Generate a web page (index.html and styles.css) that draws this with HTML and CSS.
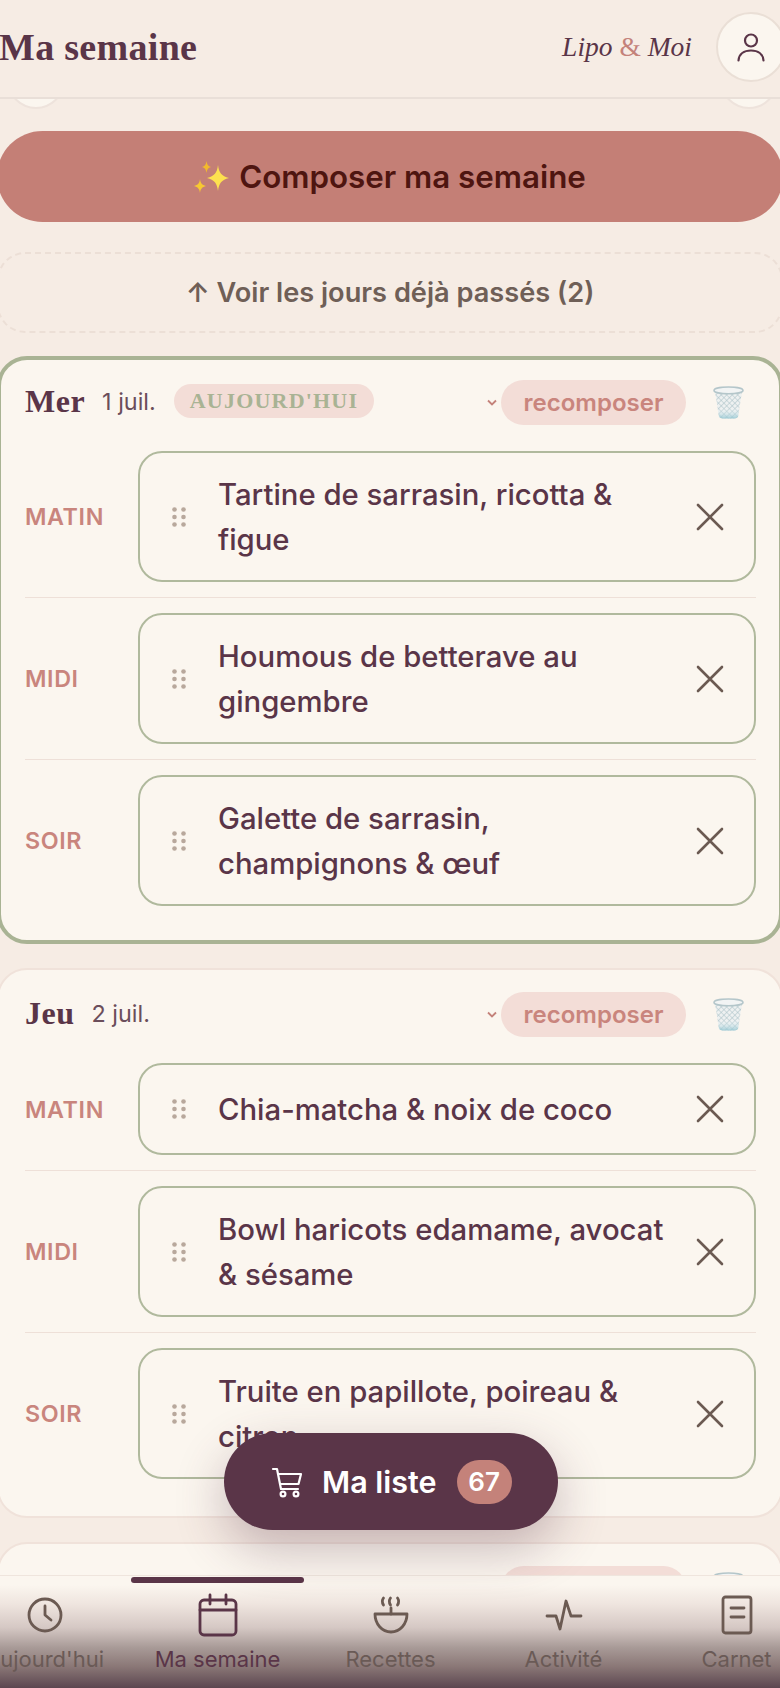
FILE: index.html
```html
<!DOCTYPE html>
<html lang="fr">
<head>
    <meta charset="UTF-8">
    <meta name="viewport" content="width=device-width, initial-scale=1.0">
    <title>Ma semaine</title>
    <link rel="stylesheet" href="styles.css">
</head>
<body>
    <svg class="defs" width="0" height="0">
        <defs>
            <pattern id="mesh" width="4" height="4" patternUnits="userSpaceOnUse" patternTransform="rotate(45)">
                <rect width="4" height="4" fill="#eef1f1"/>
                <path d="M0 0H4M0 0V4" stroke="#a9c0c6" stroke-width="1.1"/>
            </pattern>
            <linearGradient id="basket" x1="0" y1="0" x2="0" y2="1">
                <stop offset="0.6" stop-color="#fff" stop-opacity="0"/>
                <stop offset="1" stop-color="#8fc4d0" stop-opacity="0.8"/>
            </linearGradient>
            <symbol id="trash" viewBox="0 0 32 34">
                <path d="M2 5 6 31Q6.500 33.500 10 33.500H22Q25.500 33.500 26 31L30 5Z" fill="url(#mesh)"/>
                <path d="M2 5 6 31Q6.500 33.500 10 33.500H22Q25.500 33.500 26 31L30 5Z" fill="url(#basket)"/>
                <ellipse cx="16" cy="4.500" rx="15" ry="3.500" fill="#f2f4f4" stroke="#b4c6ca" stroke-width="1.500"/>
            </symbol>
            <symbol id="cross" viewBox="0 0 28 28">
                <path d="M2 2 26 26M26 2 2 26" fill="none" stroke="#6b5a52" stroke-width="2.600" stroke-linecap="round"/>
            </symbol>
            <symbol id="grip" viewBox="0 0 14 20">
                <g fill="#b8a89c">
                    <circle cx="2.500" cy="2.500" r="2.300"/><circle cx="11.500" cy="2.500" r="2.300"/>
                    <circle cx="2.500" cy="10" r="2.300"/><circle cx="11.500" cy="10" r="2.300"/>
                    <circle cx="2.500" cy="17.500" r="2.300"/><circle cx="11.500" cy="17.500" r="2.300"/>
                </g>
            </symbol>
            <symbol id="chevron" viewBox="0 0 10 7">
                <path d="M1 1.500 5 5.500 9 1.500" fill="none" stroke="#c4827a" stroke-width="1.800"/>
            </symbol>
        </defs>
    </svg>

    <div class="app">
        <header class="topbar">
            <h1>Ma semaine</h1>
            <div class="topbar-right">
                <span class="brand">Lipo <em>&amp;</em> Moi</span>
                <button class="avatar">
                    <svg width="30" height="30" viewBox="0 0 30 30" fill="none" stroke="#5a3548" stroke-width="2.200" stroke-linecap="round">
                        <circle cx="15" cy="8.500" r="6"/>
                        <path d="M2.500 28.500C3 22 8 18.500 15 18.500S27 22 27.500 28.500"/>
                    </svg>
                </button>
            </div>
        </header>

        <main class="content">
            <div class="week-nav">
                <span class="round-btn"></span>
                <span class="round-btn"></span>
            </div>

            <button class="compose">
                <svg class="sparkles" width="36" height="32" viewBox="0 0 36 32">
                    <path d="M24 4C25 12 27.500 15 35 17 27.500 19 25 22 24 30 23 22 20.500 19 13 17 20.500 15 23 12 24 4Z" fill="#fde14f"/>
                    <path d="M12.500 0C13 3.500 14 5 17 6 14 7 13 8.500 12.500 12 12 8.500 11 7 8 6 11 5 12 3.500 12.500 0Z" fill="#f2b92c"/>
                    <path d="M6 18C6.500 22 8 24 12 25 8 26 6.500 28 6 32 5.500 28 4 26 0 25 4 24 5.500 22 6 18Z" fill="#f7c832"/>
                </svg>
                Composer ma semaine
            </button>

            <button class="past">↑ Voir les jours déjà passés (2)</button>

            <section class="day today">
                <div class="day-head">
                    <div class="day-title">
                        <h2>Mer</h2>
                        <span class="date">1 juil.</span>
                        <span class="today-chip">AUJOURD'HUI</span>
                    </div>
                    <div class="day-actions">
                        <svg class="chevron"><use href="#chevron"/></svg>
                        <span class="recompose">recomposer</span>
                        <svg class="trash"><use href="#trash"/></svg>
                    </div>
                </div>
                <div class="meal">
                    <span class="meal-label">MATIN</span>
                    <div class="slot">
                        <svg class="grip"><use href="#grip"/></svg>
                        <p>Tartine de sarrasin, ricotta &amp; figue</p>
                        <svg class="cross"><use href="#cross"/></svg>
                    </div>
                </div>
                <div class="meal">
                    <span class="meal-label">MIDI</span>
                    <div class="slot">
                        <svg class="grip"><use href="#grip"/></svg>
                        <p>Houmous de betterave au gingembre</p>
                        <svg class="cross"><use href="#cross"/></svg>
                    </div>
                </div>
                <div class="meal">
                    <span class="meal-label">SOIR</span>
                    <div class="slot">
                        <svg class="grip"><use href="#grip"/></svg>
                        <p>Galette de sarrasin, champignons &amp; œuf</p>
                        <svg class="cross"><use href="#cross"/></svg>
                    </div>
                </div>
            </section>

            <section class="day">
                <div class="day-head">
                    <div class="day-title">
                        <h2>Jeu</h2>
                        <span class="date">2 juil.</span>
                    </div>
                    <div class="day-actions">
                        <svg class="chevron"><use href="#chevron"/></svg>
                        <span class="recompose">recomposer</span>
                        <svg class="trash"><use href="#trash"/></svg>
                    </div>
                </div>
                <div class="meal">
                    <span class="meal-label">MATIN</span>
                    <div class="slot">
                        <svg class="grip"><use href="#grip"/></svg>
                        <p>Chia-matcha &amp; noix de coco</p>
                        <svg class="cross"><use href="#cross"/></svg>
                    </div>
                </div>
                <div class="meal">
                    <span class="meal-label">MIDI</span>
                    <div class="slot">
                        <svg class="grip"><use href="#grip"/></svg>
                        <p>Bowl haricots edamame, avocat &amp; sésame</p>
                        <svg class="cross"><use href="#cross"/></svg>
                    </div>
                </div>
                <div class="meal">
                    <span class="meal-label">SOIR</span>
                    <div class="slot">
                        <svg class="grip"><use href="#grip"/></svg>
                        <p>Truite en papillote, poireau &amp; citron</p>
                        <svg class="cross"><use href="#cross"/></svg>
                    </div>
                </div>
            </section>

            <section class="day">
                <div class="day-head">
                    <div class="day-title">
                        <h2>Ven</h2>
                        <span class="date">3 juil.</span>
                    </div>
                    <div class="day-actions">
                        <svg class="chevron"><use href="#chevron"/></svg>
                        <span class="recompose">recomposer</span>
                        <svg class="trash"><use href="#trash"/></svg>
                    </div>
                </div>
            </section>
        </main>

        <button class="list-fab">
            <svg width="32" height="32" viewBox="0 0 32 32" fill="none" stroke="#fff" stroke-width="2.200" stroke-linecap="round" stroke-linejoin="round">
                <path d="M2 3H6L10 23H27"/>
                <path d="M7 8H30L27.500 18H9"/>
                <circle cx="12" cy="28" r="2.400"/>
                <circle cx="25" cy="28" r="2.400"/>
            </svg>
            <span>Ma liste</span>
            <b class="count">67</b>
        </button>

        <nav class="tabs">
            <a class="tab">
                <span class="tab-icon">
                    <svg width="36" height="36" viewBox="0 0 36 36" fill="none" stroke="#6b5a52" stroke-width="2.800" stroke-linecap="round" stroke-linejoin="round">
                        <circle cx="18" cy="18" r="16"/>
                        <path d="M18 9V18L24 23"/>
                    </svg>
                </span>
                Aujourd'hui
            </a>
            <a class="tab active">
                <span class="tab-icon">
                    <svg width="40" height="44" viewBox="0 0 40 44" fill="none" stroke="#5a3548" stroke-width="2.800" stroke-linecap="round" stroke-linejoin="round">
                        <rect x="2" y="7" width="36" height="35" rx="4"/>
                        <path d="M2 17H38M12 2V11M28 2V11"/>
                    </svg>
                </span>
                Ma semaine
            </a>
            <a class="tab">
                <span class="tab-icon">
                    <svg width="36" height="38" viewBox="0 0 36 38" fill="none" stroke="#6b5a52" stroke-width="2.800" stroke-linecap="round" stroke-linejoin="round">
                        <path d="M2 18H34C34 28 27 36 18 36S2 28 2 18Z"/>
                        <path d="M18 12V18"/>
                        <path d="M10.500 2C9 4 9 6.500 10.500 9M17.500 2C16 4 16 6.500 17.500 9M24.500 2C26 4 26 6.500 24.500 9"/>
                    </svg>
                </span>
                Recettes
            </a>
            <a class="tab">
                <span class="tab-icon">
                    <svg width="38" height="34" viewBox="0 0 38 34" fill="none" stroke="#6b5a52" stroke-width="2.800" stroke-linecap="round" stroke-linejoin="round">
                        <path d="M2 18H11L15 31 21 3 26 18H36"/>
                    </svg>
                </span>
                Activité
            </a>
            <a class="tab">
                <span class="tab-icon">
                    <svg width="32" height="40" viewBox="0 0 32 40" fill="none" stroke="#6b5a52" stroke-width="2.800" stroke-linecap="round" stroke-linejoin="round">
                        <rect x="2" y="2" width="28" height="36" rx="2.500"/>
                        <path d="M10 13H23M10 22H23"/>
                    </svg>
                </span>
                Carnet
            </a>
        </nav>
    </div>
</body>
</html>
```

FILE: styles.css
```css
/* General Layout and Reset */
* {
    margin: 0;
    padding: 0;
    box-sizing: border-box;
}
html, body {
    height: 100%;
    overflow: hidden;
}
body {
    font-family: 'Inter', sans-serif;
    background-color: #f6ece4;
    color: #5a3548;
}
button {
    font-family: inherit;
    border: none;
    background: none;
}
.defs {
    display: block;
}

.app {
    position: relative;
    height: 1688px;
    display: flex;
    flex-direction: column;
    overflow: hidden;
}

/* Top bar */
.topbar {
    position: relative;
    z-index: 2;
    height: 99px;
    flex-shrink: 0;
    margin-right: -6px;
    padding: 0 0 4px;
    display: flex;
    align-items: center;
    justify-content: space-between;
    background-color: #f6ece4;
    border-bottom: 2px solid #e9dfd8;
}
.topbar h1 {
    font-family: 'Liberation Serif', serif;
    font-size: 38px;
    font-weight: 700;
    letter-spacing: 0.3px;
    margin-left: -1px;
}
.topbar-right {
    display: flex;
    align-items: center;
    gap: 24px;
}
.brand {
    font-family: 'Liberation Serif', serif;
    font-style: italic;
    font-size: 27.500px;
    color: #5a3548;
}
.brand em {
    font-style: normal;
    color: #c4827a;
}
.avatar {
    width: 70px;
    height: 70px;
    border-radius: 50%;
    background-color: #fbf6ef;
    border: 2px solid #eadfd6;
    display: flex;
    align-items: center;
    justify-content: center;
}

/* Scrolling content */
.content {
    flex: 1;
    min-height: 0;
    overflow: hidden;
}
.week-nav {
    display: flex;
    justify-content: space-between;
    margin: -48px 2px 0 7px;
    height: 58px;
}
.round-btn {
    width: 58px;
    height: 58px;
    border-radius: 50%;
    background-color: #fbf6ef;
    border: 2px solid #eee3dc;
}
.compose, .past, .day {
    display: block;
    width: 786px;
    margin-left: -3px;
}
.compose {
    height: 91px;
    margin-top: 22px;
    border-radius: 46px;
    background-color: #c47f76;
    color: #4e1510;
    font-size: 31.300px;
    font-weight: 600;
    display: flex;
    align-items: center;
    justify-content: center;
    gap: 9px;
}
.past {
    height: 81px;
    margin-top: 30px;
    margin-bottom: -1px;
    border: 2px dashed #ecdfd6;
    border-radius: 28px;
    color: #6f5f57;
    font-size: 27.200px;
    font-weight: 600;
}

/* Day cards */
.day {
    margin-top: 24px;
    padding: 22px 25px 22px 26px;
    border: 2px solid #f0e2da;
    border-radius: 30px;
    background-color: #fbf6ef;
}
.today {
    border: 4px solid #a9b394;
    padding: 20px 23px 19px 24px;
}
.day-head {
    display: flex;
    align-items: center;
    justify-content: space-between;
    height: 45px;
    margin-bottom: 11px;
}
.day-title {
    display: flex;
    align-items: center;
    margin-top: -3px;
}
.day-title h2 {
    font-family: 'Liberation Serif', serif;
    font-size: 32px;
    font-weight: 700;
    letter-spacing: 0.5px;
}
.date {
    font-size: 23.400px;
    margin-left: 17px;
    color: #6b4e5b;
}
.today-chip {
    margin-left: 18px;
    height: 34px;
    padding: 0 16px;
    border-radius: 17px;
    background-color: #f3ddd7;
    color: #a9b394;
    font-family: 'Liberation Serif', serif;
    font-size: 22px;
    font-weight: 700;
    letter-spacing: 1.200px;
    line-height: 34px;
}
.day-actions {
    display: flex;
    align-items: center;
}
.chevron {
    width: 10px;
    height: 7px;
    margin-right: 4px;
}
.recompose {
    width: 185px;
    height: 45px;
    border-radius: 23px;
    background-color: #f3ddd7;
    color: #c9857d;
    font-size: 24px;
    font-weight: 600;
    text-align: center;
    line-height: 45px;
}
.trash {
    width: 31px;
    height: 33px;
    margin: 0 12px 0 27px;
}

/* Meals */
.meal {
    display: flex;
    align-items: center;
    padding: 15px 0;
    border-bottom: 1px solid #eee0d8;
}
.meal:last-child {
    border-bottom: none;
}
.meal-label {
    width: 113px;
    flex-shrink: 0;
    color: #c9857d;
    font-size: 23.300px;
    font-weight: 600;
    letter-spacing: 0.6px;
}
.slot {
    flex: 1;
    min-height: 92px;
    padding: 18.500px 30px 18.500px 32px;
    display: flex;
    align-items: center;
    border: 2px solid #b0b99d;
    border-radius: 24px;
}
.slot p {
    flex: 1;
    font-size: 29.300px;
    font-weight: 500;
    line-height: 45px;
}
.grip {
    width: 14px;
    height: 20px;
    flex-shrink: 0;
    margin-right: 32px;
}
.cross {
    width: 28px;
    height: 28px;
    flex-shrink: 0;
    margin-left: 18px;
}

/* Floating list button */
.list-fab {
    position: absolute;
    z-index: 3;
    left: 224px;
    top: 1433px;
    width: 334px;
    height: 97px;
    border-radius: 49px;
    background-color: #5a3548;
    color: #fff;
    font-size: 30.500px;
    font-weight: 600;
    display: flex;
    align-items: center;
    padding-left: 47px;
    box-shadow: 0 18px 50px rgba(90, 53, 72, 0.32);
}
.list-fab span {
    margin-left: 19px;
}
.count {
    width: 55px;
    height: 44px;
    margin-left: 20px;
    border-radius: 22px;
    background-color: #c4827a;
    font-size: 26px;
    font-weight: 600;
    line-height: 44px;
    text-align: center;
}

/* Bottom tabs */
.tabs {
    position: relative;
    z-index: 2;
    flex-shrink: 0;
    height: 113px;
    width: 865px;
    margin-left: -42px;
    display: grid;
    grid-template-columns: repeat(5, 173px);
    border-top: 1px solid #efe5dd;
    background: linear-gradient(to bottom, #fbf6ef 0, #fbf6ef 8%, #efe5df 25%, #d5c8c4 46%, #a89a97 64%, #8a7776 81%, #5b4650 100%);
}
.tab {
    position: relative;
    display: flex;
    flex-direction: column;
    align-items: center;
    padding-top: 16px;
    color: #6a5a56;
    font-size: 22px;
}
.tab-icon {
    height: 46px;
    margin-bottom: 8px;
    display: flex;
    align-items: center;
    justify-content: center;
}
.tab.active {
    color: #5a3548;
}
.tab.active::before {
    content: "";
    position: absolute;
    top: 1px;
    left: 0;
    right: 0;
    height: 6px;
    border-radius: 3px;
    background-color: #5a3548;
}
```
